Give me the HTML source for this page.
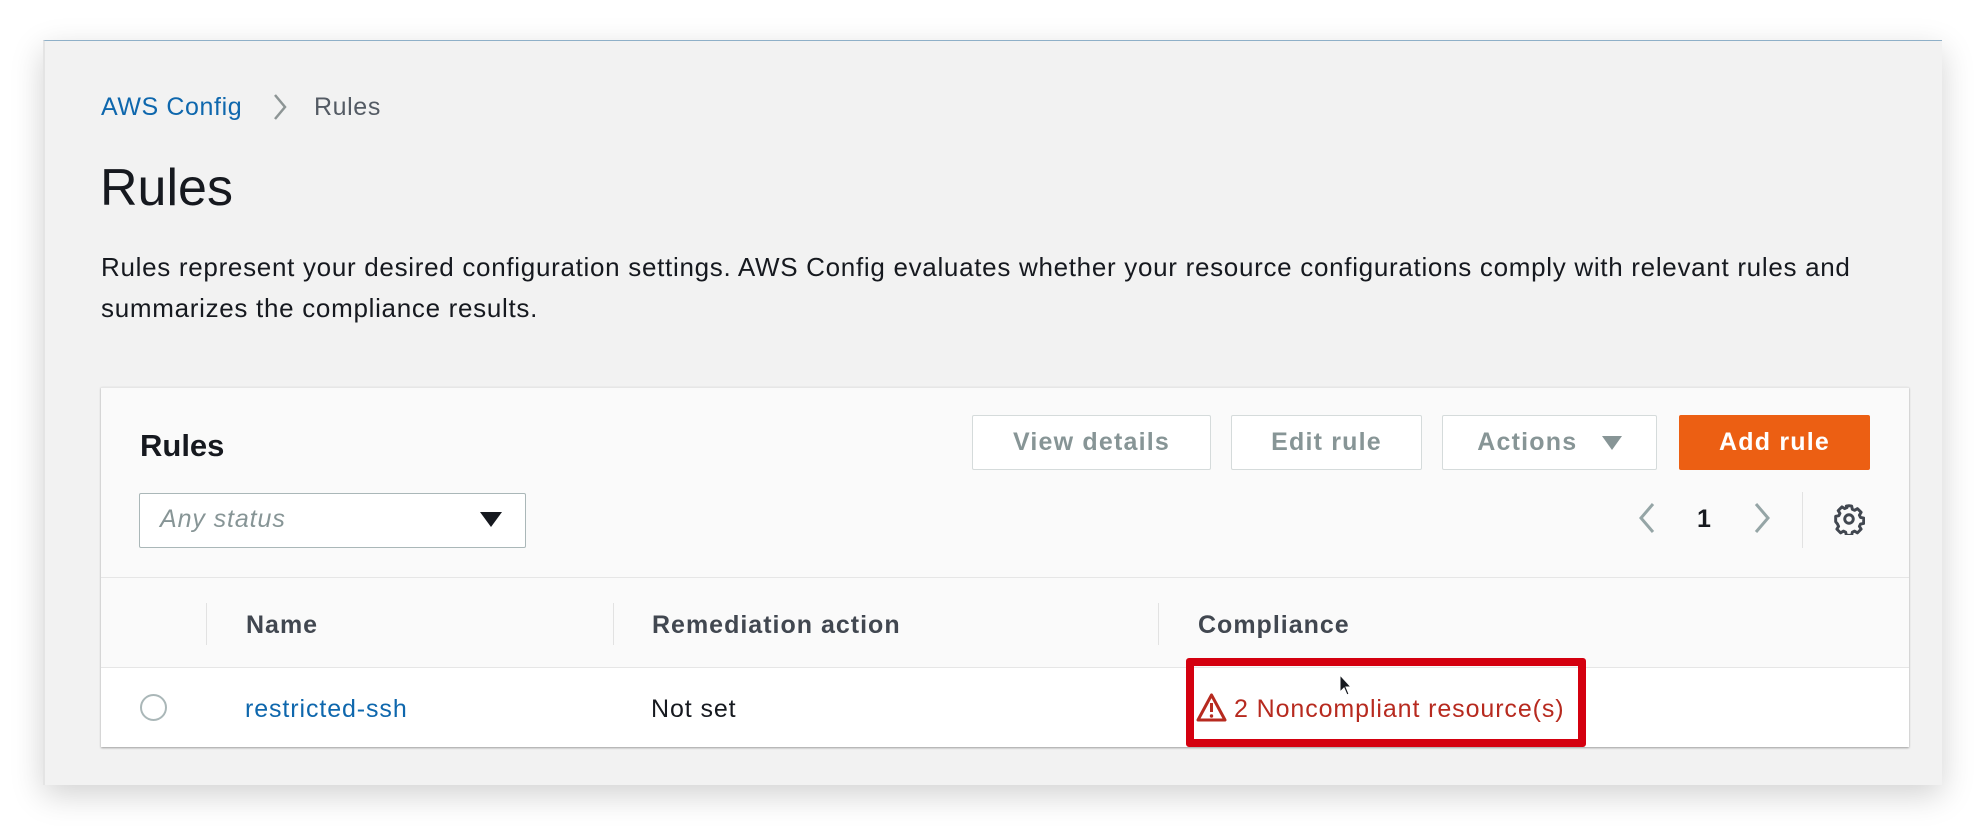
<!DOCTYPE html>
<html><head><meta charset="utf-8"><style>
*{box-sizing:border-box;margin:0;padding:0}
body{width:1982px;height:826px;background:#fff;font-family:"Liberation Sans",sans-serif;position:relative;overflow:hidden;color:#16191f}
.win{position:absolute;left:43px;top:40px;width:1899px;height:745px;background:#f2f2f2;border-top:1px solid #8fb0c8;border-left:2px solid #e4e4e4;box-shadow:0 10px 30px rgba(0,0,0,.18)}
.a{position:absolute;white-space:nowrap}
.t{font-size:25px;letter-spacing:0.9px}
.panel{position:absolute;left:101px;top:387px;width:1808px;height:360px;background:#fafafa;box-shadow:0 1px 2px rgba(0,0,0,.35);border-top:1px solid #e6e6e6}
.btn{position:absolute;top:415px;height:55px;border:1px solid #d5dbdb;background:#fff;color:#879596;font-weight:bold;font-size:25px;letter-spacing:1.2px;display:flex;align-items:center;justify-content:center;border-radius:2px}
.hd{font-weight:bold;font-size:25px;letter-spacing:1px;color:#414750}
.vd{position:absolute;width:1px;background:#e2e2e2;top:603px;height:42px}
</style></head><body>
<div class="win"></div>
<div class="a" style="left:101px;top:93px;font-size:25px;letter-spacing:0.6px;color:#0e67ad">AWS Config</div>
<svg class="a" style="left:272px;top:93px" width="16" height="28"><path d="M3 2 L13 14 L3 26" fill="none" stroke="#8d9595" stroke-width="2.5"/></svg>
<div class="a" style="left:314px;top:93px;font-size:25px;letter-spacing:0.6px;color:#545b64">Rules</div>
<div class="a" style="left:100px;top:158px;font-size:52px;color:#16191f">Rules</div>
<div class="a" style="left:101px;top:247px;font-size:26px;letter-spacing:0.7px;line-height:41px;color:#16191f">Rules represent your desired configuration settings. AWS Config evaluates whether your resource configurations comply with relevant rules and<br>summarizes the compliance results.</div>
<div class="panel"></div>
<div class="a" style="left:140px;top:428px;font-size:31px;font-weight:bold">Rules</div>
<div class="btn" style="left:972px;width:239px">View details</div>
<div class="btn" style="left:1231px;width:191px">Edit rule</div>
<div class="btn" style="left:1442px;width:215px">Actions&nbsp;&nbsp;&nbsp;<svg width="20" height="16"><path d="M0 1 H20 L10 15Z" fill="#879596"/></svg></div>
<div class="btn" style="left:1679px;width:191px;background:#ec5f13;border-color:#ec5f13;color:#fff">Add rule</div>
<div class="a" style="left:139px;top:493px;width:387px;height:55px;background:#fff;border:1px solid #aab7b8;border-radius:2px"></div>
<div class="a t" style="left:160px;top:505px;font-style:italic;color:#879596">Any status</div>
<svg class="a" style="left:480px;top:512px" width="22" height="16"><path d="M0 0 H22 L11 15Z" fill="#16191f"/></svg>
<svg class="a" style="left:1637px;top:502px" width="20" height="32"><path d="M16 2 L4 16 L16 30" fill="none" stroke="#95a5a6" stroke-width="3"/></svg>
<div class="a" style="left:1697px;top:505px;font-size:25px;font-weight:bold">1</div>
<svg class="a" style="left:1752px;top:502px" width="20" height="32"><path d="M4 2 L16 16 L4 30" fill="none" stroke="#95a5a6" stroke-width="3"/></svg>
<div class="a" style="left:1802px;top:492px;width:1px;height:56px;background:#e2e2e2"></div>
<svg class="a" style="left:1833px;top:503px" width="32" height="32" viewBox="0 0 24 24"><path d="M12 2l2 .3.5 2.4 1.7.8 2.1-1.3 2.8 2.8-1.3 2.1.8 1.7 2.4.5v4l-2.4.5-.8 1.7 1.3 2.1-2.8 2.8-2.1-1.3-1.7.8-.5 2.4h-4l-.5-2.4-1.7-.8-2.1 1.3-2.8-2.8 1.3-2.1-.8-1.7L2 14v-4l2.4-.5.8-1.7-1.3-2.1 2.8-2.8 2.1 1.3 1.7-.8L10 2.3z" fill="none" stroke="#414750" stroke-width="2.2" stroke-linejoin="round"/><circle cx="12" cy="12" r="3.2" fill="none" stroke="#414750" stroke-width="2.2"/></svg>
<div class="a" style="left:101px;top:577px;width:1808px;height:1px;background:#e6e6e6"></div>
<div class="vd" style="left:206px"></div><div class="vd" style="left:613px"></div><div class="vd" style="left:1158px"></div>
<div class="a hd" style="left:246px;top:611px">Name</div>
<div class="a hd" style="left:652px;top:611px">Remediation action</div>
<div class="a hd" style="left:1198px;top:611px">Compliance</div>
<div class="a" style="left:101px;top:667px;width:1808px;height:80px;background:#fff;border-top:1px solid #e6e6e6"></div>
<div class="a" style="left:140px;top:694px;width:27px;height:27px;border:2px solid #aab7b8;border-radius:50%"></div>
<div class="a t" style="left:245px;top:695px;color:#0e67ad">restricted-ssh</div>
<div class="a t" style="left:651px;top:695px">Not set</div>
<div class="a" style="left:1186px;top:658px;width:400px;height:89px;border:8px solid #d4000f;border-radius:3px"></div>
<svg class="a" style="left:1196px;top:692px" width="31" height="31" viewBox="0 0 31 31"><path d="M15.5 3 L29 28 H2Z" fill="none" stroke="#b72a1f" stroke-width="3" stroke-linejoin="round"/><path d="M15.5 11 V20" stroke="#b72a1f" stroke-width="3"/><circle cx="15.5" cy="24" r="1.7" fill="#b72a1f"/></svg>
<div class="a t" style="left:1234px;top:695px;color:#b72a1f">2 Noncompliant resource(s)</div>
<svg class="a" style="left:1338px;top:674px" width="16" height="24"><path d="M2 1 V18 L6 14 L9 21 L11 20 L8 13 H13Z" fill="#16191f" stroke="#fff" stroke-width="1"/></svg>
</body></html>
